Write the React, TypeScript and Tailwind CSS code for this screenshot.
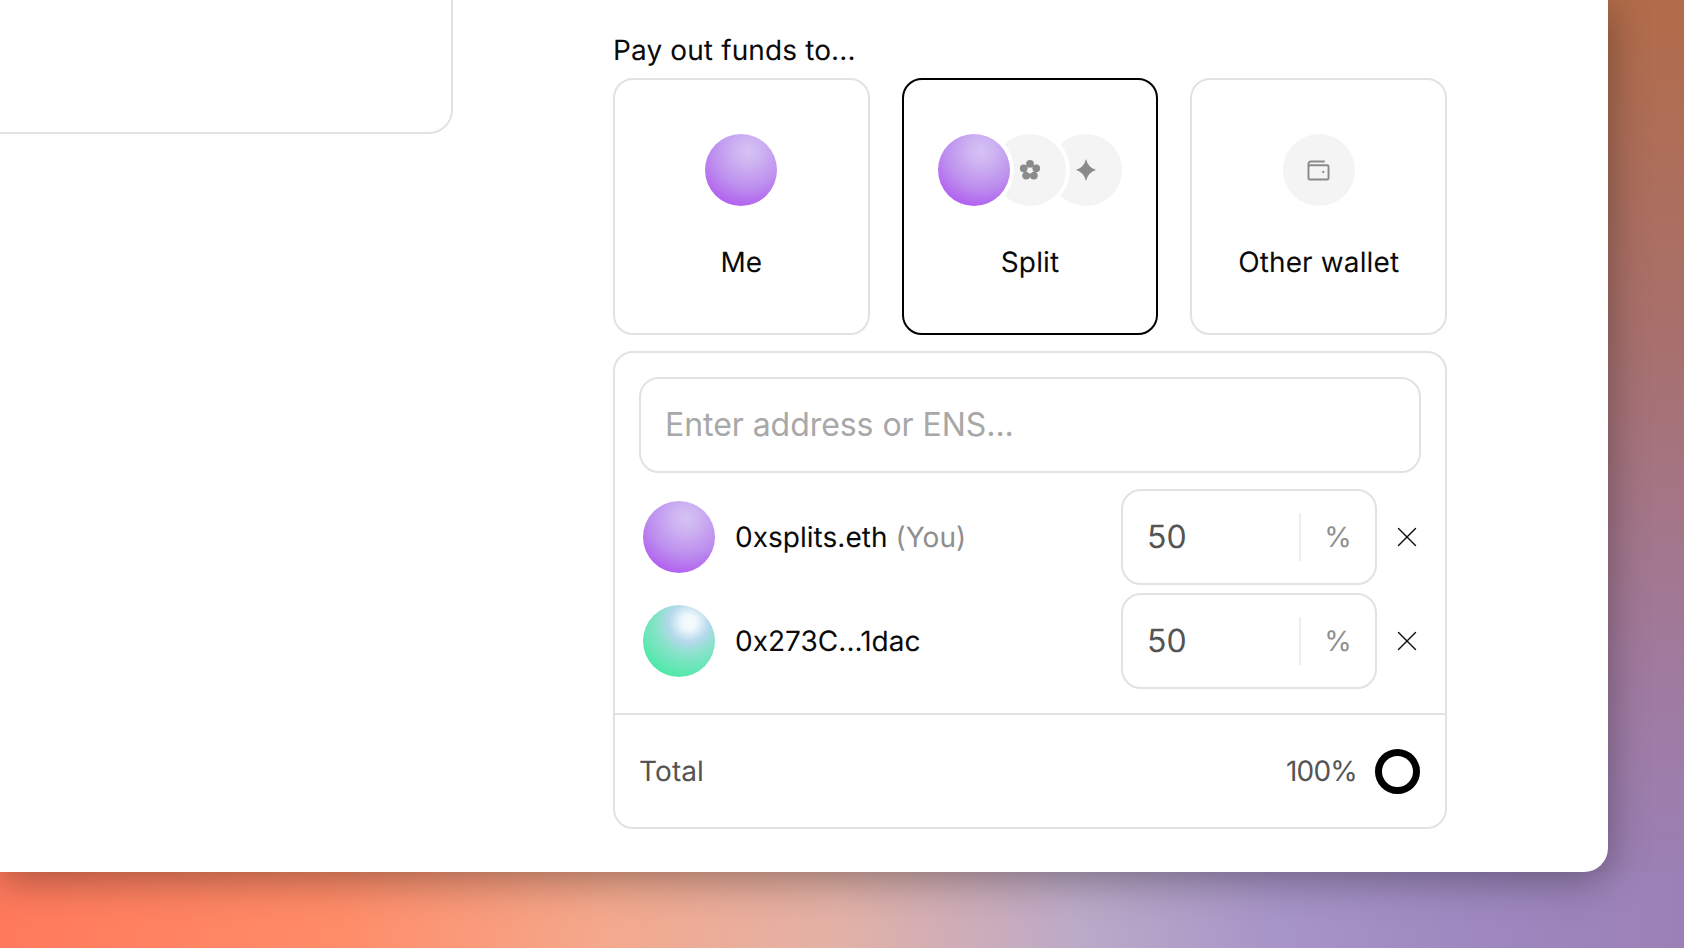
import { X } from 'lucide-react'

function Sphere({ green = false }: { green?: boolean }) {
  return (
    <div
      className={
        green
          ? 'w-[72px] h-[72px] rounded-full shrink-0 bg-[radial-gradient(circle_at_64%_24%,#f6fbfd_0%,#f0f8fc_10%,#b4d8ec_28%,#8ce2cc_44%,#50e9a9_78%)]'
          : 'w-[72px] h-[72px] rounded-full shrink-0 bg-[radial-gradient(circle_at_60%_24%,#d5c2f4_0%,#cfb6f2_16%,#bd8fee_52%,#b264ef_78%)]'
      }
    />
  )
}

function GrayCircle({ children, className = '' }: { children: React.ReactNode; className?: string }) {
  return (
    <div className={`w-[72px] h-[72px] rounded-full bg-[#f4f4f4] flex items-center justify-center shrink-0 ${className}`}>
      {children}
    </div>
  )
}

function FlowerIcon() {
  return (
    <svg width="22" height="22" viewBox="0 0 22 22" fill="#8a8a8a">
      <circle cx="11" cy="4.8" r="3.9" />
      <circle cx="17.2" cy="9.3" r="3.9" />
      <circle cx="14.8" cy="16.6" r="3.9" />
      <circle cx="7.2" cy="16.6" r="3.9" />
      <circle cx="4.8" cy="9.3" r="3.9" />
      <circle cx="11" cy="11.4" r="2.6" fill="#f4f4f4" />
    </svg>
  )
}

function SparkleIcon() {
  return (
    <svg width="22" height="22" viewBox="0 0 22 22" fill="#8a8a8a">
      <path d="M11 0 Q13.2 8.8 21 11 Q13.2 13.2 11 22 Q8.8 13.2 1 11 Q8.8 8.8 11 0 Z" />
    </svg>
  )
}

function WalletIcon() {
  return (
    <svg width="23" height="21" viewBox="0 0 24 22" fill="none" stroke="#8a8a8a" strokeWidth="2">
      <path d="M1.5 6.5 V4 A2.5 2.5 0 0 1 4 1.5 H18.5" />
      <rect x="1.5" y="5.5" width="21" height="15" rx="1.5" />
      <circle cx="17" cy="12.5" r="1.2" fill="#8a8a8a" stroke="none" />
    </svg>
  )
}

function OptionCard({
  label,
  selected = false,
  children,
}: {
  label: string
  selected?: boolean
  children: React.ReactNode
}) {
  return (
    <div
      className={`flex-1 h-[257px] rounded-[20px] border-2 flex flex-col items-center pt-[54px] ${
        selected ? 'border-black' : 'border-[#e2e2e2]'
      }`}
    >
      <div className="flex items-center h-[72px]">{children}</div>
      <div className="mt-[36px] text-[28px] leading-[40px] tracking-[0.12px] text-[#0a0a0a]">{label}</div>
    </div>
  )
}

function RecipientRow({ name, you = false, green = false }: { name: string; you?: boolean; green?: boolean }) {
  return (
    <div className="flex items-center">
      <div className="flex-1 flex items-center pl-[4px] gap-[20px]">
        <Sphere green={green} />
        <div className="text-[28px] leading-[40px] tracking-[0.03px] text-[#0a0a0a]">
          {name}
          {you && <span className="text-[#8f8f8f]"> (You)</span>}
        </div>
      </div>
      <div className="w-[256px] h-[96px] rounded-[20px] border-2 border-[#e2e2e2] flex items-center">
        <div className="w-[176px] pl-[24px] text-[32px] text-[#555555]">50</div>
        <div className="w-[2px] h-[48px] bg-[#eeeeee]" />
        <div className="flex-1 text-center text-[28px] text-[#8f8f8f]">%</div>
      </div>
      <div className="w-[44px] flex pl-[13px]">
        <X size={34} strokeWidth={1} className="shrink-0 text-[#111111]" />
      </div>
    </div>
  )
}

export default function App() {
  return (
    <div className="relative h-[948px] overflow-hidden font-['Inter',sans-serif] [text-rendering:geometricPrecision] bg-no-repeat bg-bottom bg-[size:100%_76px,100%_100%] bg-[linear-gradient(90deg,#ff7a5c_0%,#ff8c68_20%,#f4a98d_36%,#e2b1a7_50%,#bcaac8_64%,#a794c8_76%,#9e88bf_88%,#9b80b5_100%),linear-gradient(180deg,#b26c49_0%,#a8706c_35%,#a07a9e_70%,#9b80b5_92%)]">
      <div className="w-[1608px] h-[872px] bg-white rounded-br-[24px] shadow-[0_8px_40px_rgba(0,0,0,0.35)] flex">
        {/* Left column, card cut off by the top of the page */}
        <div className="w-[453px] shrink-0">
          <div className="h-[134px] border-r-2 border-b-2 border-[#e2e2e2] rounded-br-[24px]" />
        </div>

        {/* Right column */}
        <div className="ml-[160px] w-[834px] pt-[30px]">
          <div className="text-[28px] leading-[40px] tracking-[0.12px] mb-[8px] text-[#0a0a0a]">Pay out funds to...</div>

          <div className="flex gap-[32px]">
            <OptionCard label="Me">
              <Sphere />
            </OptionCard>
            <OptionCard label="Split" selected>
              <div className="relative z-20 rounded-full ring-4 ring-white">
                <Sphere />
              </div>
              <GrayCircle className="relative z-10 -ml-[16px] ring-4 ring-white">
                <FlowerIcon />
              </GrayCircle>
              <GrayCircle className="-ml-[16px]">
                <SparkleIcon />
              </GrayCircle>
            </OptionCard>
            <OptionCard label="Other wallet">
              <GrayCircle>
                <WalletIcon />
              </GrayCircle>
            </OptionCard>
          </div>

          <div className="mt-[16px] rounded-[20px] border-2 border-[#e2e2e2]">
            <div className="p-[24px] flex flex-col gap-[8px]">
              <input
                placeholder="Enter address or ENS..."
                className="h-[96px] mb-[8px] w-full rounded-[20px] border-2 border-[#e2e2e2] px-[24px] pb-[2px] text-[32px] tracking-[-0.05px] outline-none placeholder:text-[#a8a8a8]"
              />
              <RecipientRow name="0xsplits.eth" you />
              <RecipientRow name="0x273C...1dac" green />
            </div>
            <div className="border-t-2 border-[#e2e2e2] h-[114px] px-[24px] flex items-center justify-between">
              <div className="text-[28px] tracking-[0.1px] text-[#555555]">Total</div>
              <div className="flex items-center gap-[18px] pr-[1px]">
                <div className="text-[28px] tracking-[-0.8px] text-[#555555]">100%</div>
                <div className="w-[45px] h-[45px] rounded-full border-[7px] border-black" />
              </div>
            </div>
          </div>
        </div>
      </div>
    </div>
  )
}
